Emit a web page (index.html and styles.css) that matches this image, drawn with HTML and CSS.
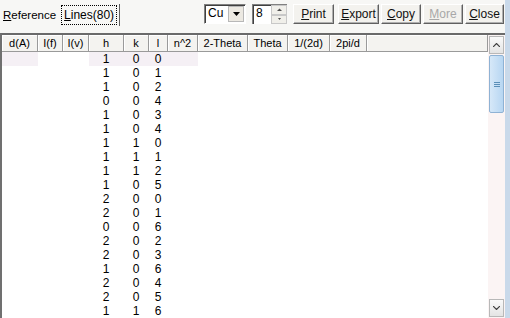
FILE: index.html
```html
<!DOCTYPE html>
<html lang="en">
<head>
    <meta charset="UTF-8">
    <title>Lines</title>
    <link rel="stylesheet" href="styles.css">
</head>
<body>
    <div class="window">
        <div class="toolbar">
            <div class="tabs">
                <span class="tab"><u>R</u>eference</span>
                <span class="tab active"><span class="focus"><u>L</u>ines(80)</span></span>
            </div>
            <div class="tools">
                <div class="combo">
                    <span class="combo-text">Cu</span>
                    <span class="combo-btn">
                        <svg width="7" height="4" viewBox="0 0 7 4"><path d="M0 0h7L3.5 4z" fill="#000"/></svg>
                    </span>
                </div>
                <div class="spin">
                    <span class="spin-text">8</span>
                    <span class="spin-btns">
                        <span class="spin-btn">
                            <svg width="5" height="3" viewBox="0 0 5 3"><path d="M0 3L2.5 0.5L5 3z" fill="#505050"/></svg>
                        </span>
                        <span class="spin-btn">
                            <svg width="3" height="2" viewBox="0 0 3 2"><path d="M0 0h3L1.5 2z" fill="#505050"/></svg>
                        </span>
                    </span>
                </div>
                <button class="btn w-print"><u>P</u>rint</button>
                <button class="btn w-export"><u>E</u>xport</button>
                <button class="btn w-copy"><u>C</u>opy</button>
                <button class="btn w-more" disabled><u>M</u>ore</button>
                <button class="btn w-close"><u>C</u>lose</button>
            </div>
        </div>
        <div class="grid-wrap">
            <div class="grid">
                <table class="lines">
                    <thead>
                        <tr>
                            <th class="c-d">d(A)</th>
                            <th class="c-if">I(f)</th>
                            <th class="c-iv">I(v)</th>
                            <th class="c-h">h</th>
                            <th class="c-k">k</th>
                            <th class="c-l">l</th>
                            <th class="c-n">n^2</th>
                            <th class="c-2t">2-Theta</th>
                            <th class="c-t">Theta</th>
                            <th class="c-inv">1/(2d)</th>
                            <th class="c-pi">2pi/d</th>
                            <th class="c-rest"></th>
                        </tr>
                    </thead>
                    <tbody id="rows"></tbody>
                </table>
            </div>
            <div class="scrollbar">
                <div class="sb-btn">
                    <svg width="7" height="4" viewBox="0 0 7 4"><path d="M0 4L3.5 0.5L7 4" fill="none" stroke="#404040" stroke-width="1.2"/></svg>
                </div>
                <div class="sb-thumb">
                    <svg width="6" height="7" viewBox="0 0 6 7"><path d="M0 1.5h6M0 3.5h6M0 5.5h6" stroke="#5a8fb8" stroke-width="1"/></svg>
                </div>
                <div class="sb-track"></div>
                <div class="sb-btn">
                    <svg width="7" height="4" viewBox="0 0 7 4"><path d="M0 0L3.5 3.5L7 0" fill="none" stroke="#404040" stroke-width="1.2"/></svg>
                </div>
            </div>
        </div>
    </div>
    <script>
        const hkl = [
            [1,0,0],[1,0,1],[1,0,2],[0,0,4],[1,0,3],[1,0,4],[1,1,0],[1,1,1],[1,1,2],[1,0,5],
            [2,0,0],[2,0,1],[0,0,6],[2,0,2],[2,0,3],[1,0,6],[2,0,4],[2,0,5],[1,1,6]
        ];
        const body = document.getElementById('rows');
        hkl.forEach((r, i) => {
            const tr = document.createElement('tr');
            if (i === 0) tr.className = 'sel';
            tr.innerHTML = '<td class="hl"></td><td></td><td></td>' +
                '<td class="hl">' + r[0] + '</td><td class="hl">' + r[1] + '</td><td class="hl">' + r[2] + '</td>' +
                '<td class="hl"></td><td></td><td></td><td></td><td></td><td></td>';
            body.appendChild(tr);
        });
    </script>
</body>
</html>
```

FILE: styles.css
```css
body {
    margin: 0;
    padding: 0;
    font-family: "Liberation Sans", Arial, sans-serif;
    font-size: 11px;
    color: #000;
    background: #fff;
}

.window {
    width: 510px;
    height: 318px;
    display: flex;
    flex-direction: column;
    background: #f7f7f5;
    border-right: 5px solid #c9d9ea;
    box-sizing: border-box;
    overflow: hidden;
}

.toolbar {
    height: 33px;
    display: flex;
    justify-content: space-between;
    align-items: flex-start;
    padding-top: 4px;
    box-sizing: border-box;
}

.tabs {
    display: flex;
    padding-left: 3px;
    padding-top: 3px;
}

.tab {
    height: 19px;
    line-height: 17px;
    padding-right: 4px;
    font-size: 11.5px;
}

.tab.active {
    border-right: 1px solid #606060;
    padding: 0 3px 0 2px;
    height: 22px;
    margin-top: -3px;
    line-height: 22px;
    font-size: 12px;
}

.tab .focus {
    outline: 1px dotted #000;
    padding: 2px 2px;
}

.tools {
    display: flex;
    padding-right: 1px;
}

.combo {
    width: 42px;
    height: 20px;
    display: flex;
    background: #fff;
    border-top: 1px solid #808080;
    border-left: 1px solid #808080;
    border-right: 1px solid #fff;
    border-bottom: 1px solid #fff;
    box-shadow: inset 1px 1px 0 #404040;
    box-sizing: border-box;
}

.combo-text {
    flex: 1;
    padding-left: 3px;
    line-height: 17px;
    font-size: 12px;
}

.combo-btn {
    width: 16px;
    background: #ece9e2;
    margin: 1px 1px 1px 0;
    border: 1px solid #b8b8b8;
    box-sizing: border-box;
    display: flex;
    align-items: center;
    justify-content: center;
}

.spin {
    width: 35px;
    height: 20px;
    display: flex;
    background: #fff;
    margin-left: 6px;
    margin-right: 6px;
    border-top: 1px solid #808080;
    border-left: 1px solid #808080;
    box-shadow: inset 1px 1px 0 #404040;
    box-sizing: border-box;
}

.spin-text {
    flex: 1;
    padding-left: 3px;
    line-height: 17px;
    font-size: 12px;
}

.spin-btns {
    width: 16px;
    display: flex;
    flex-direction: column;
    background: #f0efea;
}

.spin-btn {
    flex: 1;
    border: 1px solid #c8c8c8;
    display: flex;
    align-items: center;
    justify-content: center;
}

.btn {
    height: 20px;
    padding: 0;
    font-family: "Liberation Sans", Arial, sans-serif;
    font-size: 12px;
    background: #f3f2ee;
    border: 1px solid;
    border-color: #fff #606060 #606060 #fff;
    box-shadow: inset -1px -1px 0 #b0b0b0;
    color: #111;
}

.btn[disabled] {
    color: #a8a8a8;
}

.w-print { width: 41px; margin-right: 4px; }
.w-export { width: 41px; margin-right: 2px; }
.w-copy { width: 40px; margin-right: 2px; }
.w-more { width: 40px; margin-right: 2px; }
.w-close { width: 39px; }

.grid-wrap {
    flex: 1;
    display: flex;
    border-left: 2px solid #707070;
    border-top: 2px solid #6a6a6a;
    background: #fff;
    min-height: 0;
}

.grid {
    flex: 1;
    overflow: hidden;
}

.lines {
    border-collapse: collapse;
    table-layout: fixed;
    width: 486px;
}

.lines th {
    height: 16px;
    font-weight: normal;
    font-size: 11px;
    background: #f4f3f0;
    border-right: 1px solid #9a9a9a;
    border-bottom: 1px solid #9a9a9a;
    box-shadow: inset 1px 1px 0 #fff;
    padding: 0;
    text-align: center;
    white-space: nowrap;
}

.lines td {
    height: 14px;
    padding: 0;
    font-size: 12px;
    line-height: 14px;
    text-align: center;
}

.lines tr.sel td.hl {
    background: #f5f0f5;
}

.c-d { width: 35px; }
.c-if { width: 24px; }
.c-iv { width: 25px; }
.c-h { width: 34px; }
.c-k { width: 24px; }
.c-l { width: 18px; }
.c-n { width: 29px; }
.c-2t { width: 49px; }
.c-t { width: 39px; }
.c-inv { width: 41px; }
.c-pi { width: 36px; }
.c-rest { width: auto; }

.scrollbar {
    width: 17px;
    display: flex;
    flex-direction: column;
    background: #fbf4f4;
}

.sb-btn {
    height: 16px;
    margin: 1px;
    border: 1px solid #b8b8b8;
    background: linear-gradient(#fafafa, #e4e4e4);
    display: flex;
    align-items: center;
    justify-content: center;
}

.sb-thumb {
    height: 56px;
    margin: 0 1px;
    border: 1px solid #8fb2d4;
    border-radius: 2px;
    background: linear-gradient(90deg, #d6e8f8, #b7d6f2);
    display: flex;
    align-items: center;
    justify-content: center;
}

.sb-track {
    flex: 1;
}
```
